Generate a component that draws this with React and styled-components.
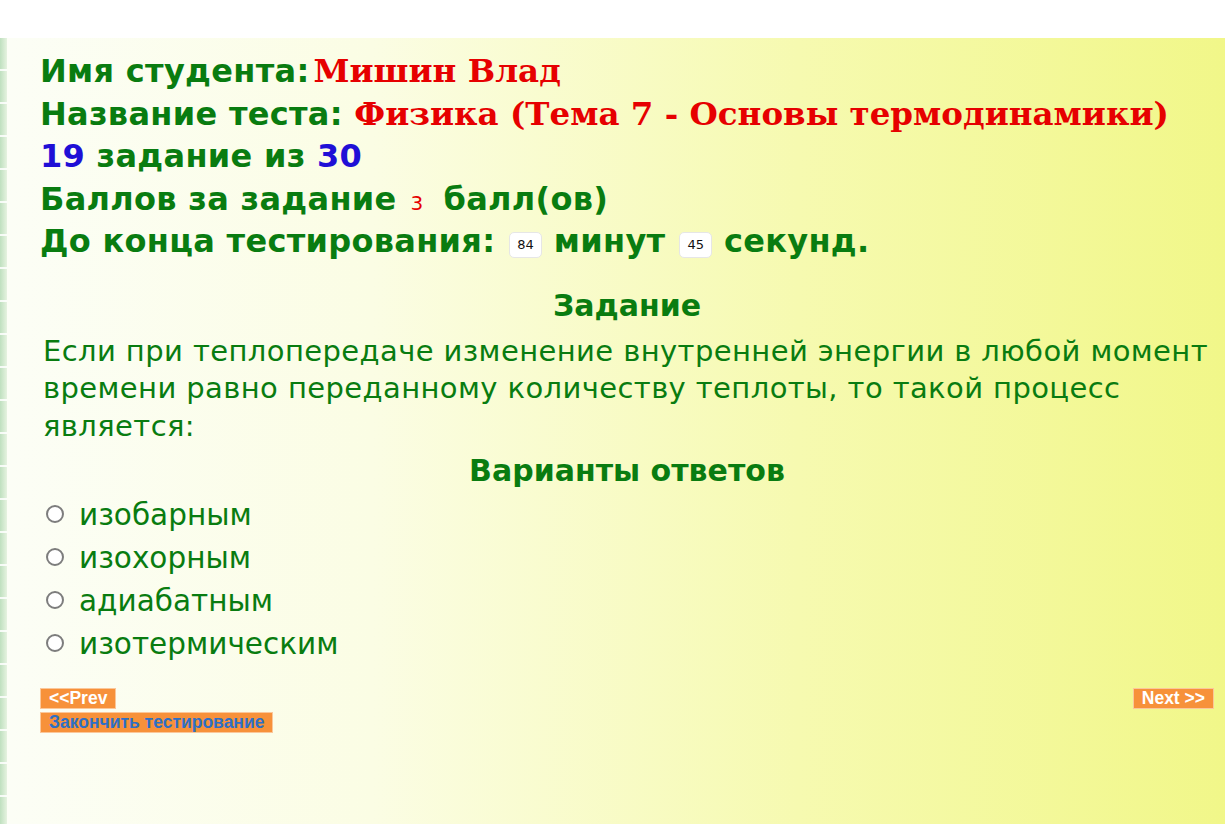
import React, { useState } from 'react';
import styled, { createGlobalStyle } from 'styled-components';

const GlobalStyle = createGlobalStyle`
  html, body {
    margin: 0;
    padding: 0;
    background: #ffffff;
  }
`;

const Page = styled.div`
  display: flex;
  flex-direction: column;
  width: 1225px;
  height: 824px;
  overflow: hidden;
`;

const TopBand = styled.div`
  height: 38px;
  background: #ffffff;
`;

const Body = styled.div`
  flex: 1;
  display: flex;
`;

// Green tiled strip along the left edge
const SideStrip = styled.div`
  width: 7px;
  background:
    repeating-linear-gradient(
      to bottom,
      transparent 0px,
      transparent 31px,
      rgba(255, 255, 255, 0.85) 31px,
      rgba(255, 255, 255, 0.85) 33px
    ),
    linear-gradient(to right, #bfe0bf, #e6f3e0);
`;

const Main = styled.div`
  flex: 1;
  padding: 12px 11px 0 33px;
  background: linear-gradient(to right, #fcfef6 0%, #fbfde4 30%, #f6fab0 65%, #f1f789 100%);
  font-family: "DejaVu Sans", Verdana, sans-serif;
  color: #097c10;
`;

const InfoLine = styled.div`
  font-weight: bold;
  font-size: 32px;
  line-height: 42.5px;
  height: 42.5px;
  letter-spacing: 0.3px;
  white-space: nowrap;
`;

const Red = styled.span`
  color: #e60000;
  font-family: "DejaVu Serif", Georgia, serif;
  font-size: 32.5px;
  font-weight: bold;
  letter-spacing: 0;
  line-height: 1;
  margin-left: ${p => p.$gap || 0}px;
`;

const Blue = styled.span`
  color: #1f0fd6;
`;

const Points = styled.span`
  color: #e60000;
  font-weight: normal;
  font-size: 20px;
  line-height: 1;
  margin: 0 20px 0 14px;
`;

const TimeBox = styled.span`
  display: inline-block;
  vertical-align: 3px;
  font-size: 13px;
  font-weight: normal;
  letter-spacing: 0;
  line-height: 24px;
  padding: 0 7px;
  margin: 0 12px 0 14px;
  background: #ffffff;
  color: #111;
  border: 1px solid #e6e6e6;
  border-radius: 5px;
`;

const SectionTitle = styled.div`
  text-align: center;
  font-weight: bold;
  font-size: 30px;
  line-height: 36px;
  margin-top: ${p => p.$top || 0}px;
`;

const Question = styled.div`
  font-size: 29px;
  line-height: 37.5px;
  letter-spacing: 0.4px;
  padding-left: 3px;
  margin-top: 9px;
`;

const Options = styled.div`
  display: flex;
  flex-direction: column;
  margin-top: 5px;
`;

const Option = styled.label`
  display: flex;
  align-items: center;
  font-size: 29.5px;
  line-height: 43px;
  cursor: pointer;
`;

const Radio = styled.input`
  appearance: none;
  width: 18px;
  height: 18px;
  margin: -4px 15px 0 6px;
  border: 2px solid #7d7d7d;
  border-radius: 50%;
  background: #fff;
  &:checked {
    background: radial-gradient(circle, #1a73e8 0 4px, #fff 5px);
    border-color: #1a73e8;
  }
`;

const Nav = styled.div`
  display: flex;
  justify-content: space-between;
  align-items: flex-start;
  margin-top: 22px;
`;

const NavLeft = styled.div`
  display: flex;
  flex-direction: column;
  align-items: flex-start;
  gap: 3px;
`;

const NavButton = styled.button`
  font-family: "Liberation Sans", Arial, sans-serif;
  font-weight: bold;
  font-size: 17.5px;
  line-height: 19px;
  padding: 0 8px;
  background: #f7913a;
  color: ${p => (p.$blue ? '#2e6fc4' : '#ffffff')};
  border: 1px solid #fbc79a;
  border-radius: 0;
  cursor: pointer;
`;

const answers = ['изобарным', 'изохорным', 'адиабатным', 'изотермическим'];

export default function App() {
  const [picked, setPicked] = useState(null);

  return (
    <Page>
      <GlobalStyle />
      <TopBand />
      <Body>
        <SideStrip />
        <Main>
          <InfoLine>
            Имя студента:<Red $gap={4}>Мишин Влад</Red>
          </InfoLine>
          <InfoLine>
            Название теста: <Red>Физика (Тема 7 - Основы термодинамики)</Red>
          </InfoLine>
          <InfoLine>
            <Blue>19</Blue> задание из <Blue>30</Blue>
          </InfoLine>
          <InfoLine>
            Баллов за задание<Points>3</Points>балл(ов)
          </InfoLine>
          <InfoLine>
            До конца тестирования:<TimeBox>84</TimeBox>минут<TimeBox>45</TimeBox>секунд.
          </InfoLine>

          <SectionTitle $top={25}>Задание</SectionTitle>
          <Question>
            Если при теплопередаче изменение внутренней энергии в любой момент времени равно
            переданному количеству теплоты, то такой процесс является:
          </Question>

          <SectionTitle $top={8}>Варианты ответов</SectionTitle>
          <Options>
            {answers.map((a) => (
              <Option key={a}>
                <Radio
                  type="radio"
                  name="answer"
                  checked={picked === a}
                  onChange={() => setPicked(a)}
                />
                {a}
              </Option>
            ))}
          </Options>

          <Nav>
            <NavLeft>
              <NavButton type="button">&lt;&lt;Prev</NavButton>
              <NavButton type="button" $blue>Закончить тестирование</NavButton>
            </NavLeft>
            <NavButton type="button">Next &gt;&gt;</NavButton>
          </Nav>
        </Main>
      </Body>
    </Page>
  );
}
